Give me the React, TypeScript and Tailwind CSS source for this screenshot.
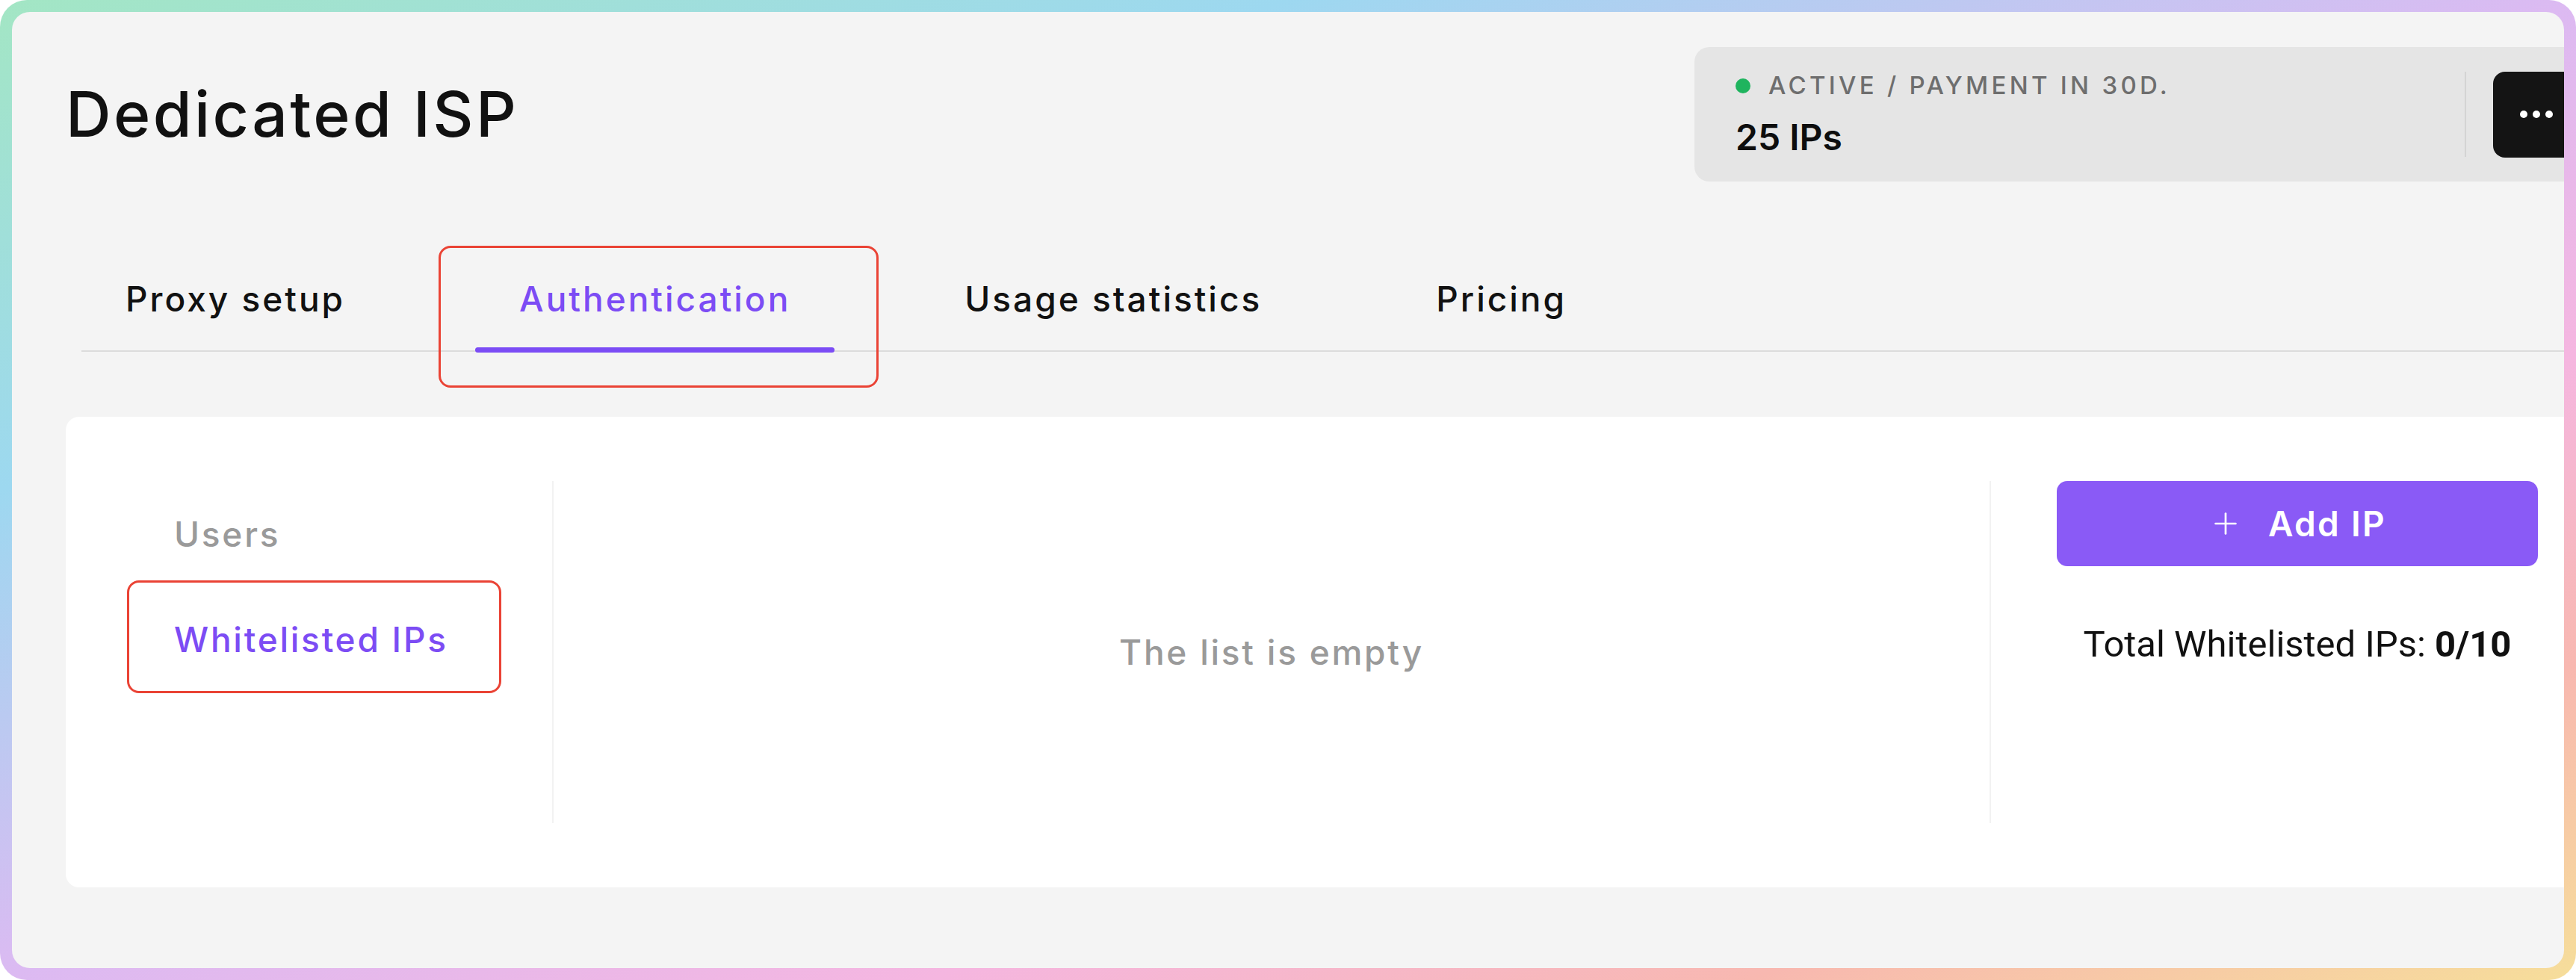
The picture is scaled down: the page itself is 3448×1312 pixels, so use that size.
import { Plus } from "lucide-react";

const tabs = ["Proxy setup", "Authentication", "Usage statistics", "Pricing"];

export default function App() {
  return (
    <div className="w-[3448px] h-[1312px] bg-white">
      <div className="w-full h-full p-[16px] rounded-[36px] bg-[linear-gradient(to_bottom_right,#a3e6c4_0%,#9dd8f0_25%,#dcbaf2_50%,#f5b6e0_68%,#f8b8b0_84%,#f6de9a_100%)]">
        <div className="w-full h-full rounded-[24px] bg-[#f4f4f4] overflow-hidden pl-[72px] font-['Inter',sans-serif]">
          <div className="w-[3391px]">
            {/* header */}
            <div className="flex items-center mt-[47px] h-[180px]">
              <h1 className="flex-1 text-[84px] leading-[84px] font-medium tracking-[0.04em] text-[#111111]">
                Dedicated ISP
              </h1>
              <div className="w-[1211px] h-[180px] shrink-0 rounded-[20px] bg-[#e5e5e5] flex items-center pl-[55px] pr-[27px]">
                <div className="flex-1 flex flex-col gap-[29px]">
                  <div className="flex items-center gap-[24px]">
                    <span className="w-[20px] h-[20px] rounded-full bg-[#1fb45e]" />
                    <span className="text-[33px] leading-[33px] font-medium tracking-[0.13em] text-[#6e6e6e]">
                      ACTIVE / PAYMENT IN 30D.
                    </span>
                  </div>
                  <div className="text-[48px] leading-[48px] font-semibold text-[#0d0d0d]">25 IPs</div>
                </div>
                <div className="w-[2px] h-[114px] bg-[#d4d4d4] mr-[36px]" />
                <button className="w-[115px] h-[115px] rounded-[16px] bg-[#141414] flex items-center justify-center gap-[7px]">
                  <span className="w-[10px] h-[10px] rounded-full bg-white" />
                  <span className="w-[10px] h-[10px] rounded-full bg-white" />
                  <span className="w-[10px] h-[10px] rounded-full bg-white" />
                </button>
              </div>
            </div>

            {/* tabs */}
            <div className="mt-[134px] ml-[21px] flex gap-[115px] border-b-2 border-[#dcdcdc]">
              {tabs.map((t) => {
                const active = t === "Authentication";
                return (
                  <div key={t} className="relative px-[59px] pb-[46px]">
                    <span
                      className={`block text-[46px] leading-[46px] font-medium tracking-[0.065em] ${
                        active ? "text-[#7c4cf4]" : "text-[#111111]"
                      }`}
                    >
                      {t}
                    </span>
                    {active && (
                      <>
                        <span className="absolute left-0 right-0 bottom-[-3px] h-[7px] rounded-full bg-[#7b4cf5]" />
                        <span className="absolute -left-[49px] -right-[59px] -top-[48px] -bottom-[50px] rounded-[16px] border-[3px] border-[#ea4335]" />
                      </>
                    )}
                  </div>
                );
              })}
            </div>

            {/* card */}
            <div className="mt-[87px] h-[630px] rounded-[18px] bg-white flex py-[86px]">
              <div className="w-[653px] pl-[82px] border-r-2 border-[#f2f2f2]">
                <div className="w-[501px] h-[141px] pl-[63px] flex items-center">
                  <span className="text-[46px] leading-[46px] font-medium tracking-[0.06em] text-[#9a9a9a]">Users</span>
                </div>
                <div className="relative w-[501px] h-[141px] pl-[63px] flex items-center">
                  <span className="text-[46px] leading-[46px] font-medium tracking-[0.06em] text-[#7c4cf4]">
                    Whitelisted IPs
                  </span>
                  <span className="absolute left-0 right-0 -top-[8px] -bottom-[2px] rounded-[16px] border-[3px] border-[#ea4335]" />
                </div>
              </div>
              <div className="flex-1 flex items-center justify-center border-r-2 border-[#f2f2f2]">
                <span className="text-[46px] leading-[46px] font-medium tracking-[0.06em] text-[#9a9a9a]">
                  The list is empty
                </span>
              </div>
              <div className="w-[814px] pl-[88px] pr-[82px]">
                <button className="w-full h-[114px] rounded-[14px] bg-[#8a5af6] flex items-center justify-center gap-[34px] text-white">
                  <Plus className="w-[46px] h-[46px]" strokeWidth={1.4} />
                  <span className="text-[46px] leading-[46px] font-semibold tracking-[0.05em]">Add IP</span>
                </button>
                <div className="mt-[80px] text-center text-[49px] leading-[49px] text-[#111111] font-['Roboto',sans-serif]">
                  Total Whitelisted IPs: <span className="font-bold">0/10</span>
                </div>
              </div>
            </div>
          </div>
        </div>
      </div>
    </div>
  );
}
